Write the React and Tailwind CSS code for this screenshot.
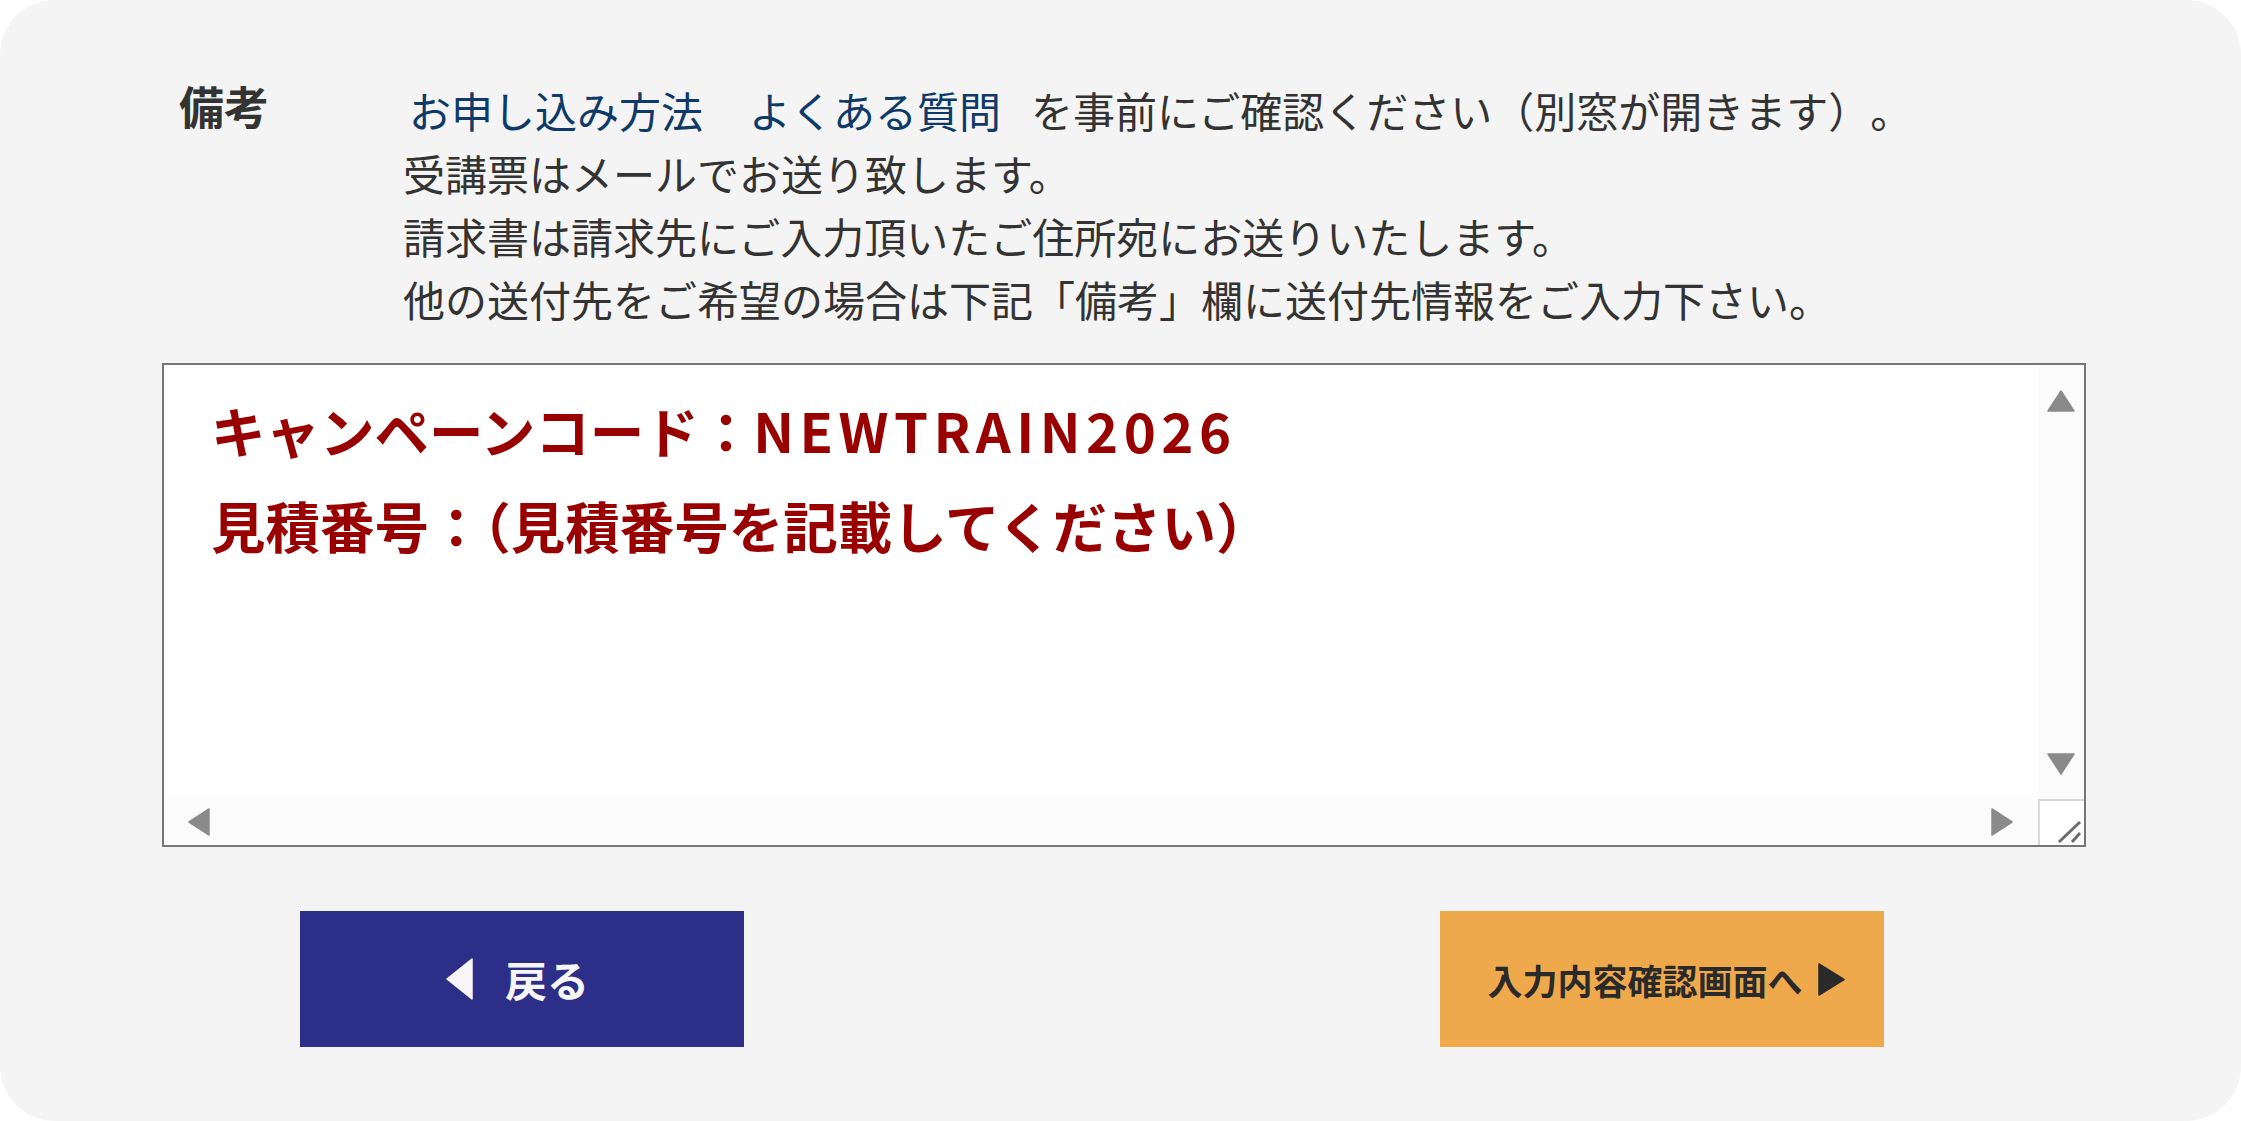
import React from "react";

function Tri({ dir, w, h, color, className = "" }) {
  let pts;
  if (dir === "up") pts = `${w / 2},1 ${w - 1},${h - 1} 1,${h - 1}`;
  else if (dir === "down") pts = `1,1 ${w - 1},1 ${w / 2},${h - 1}`;
  else if (dir === "left") pts = `${w - 1},1 ${w - 1},${h - 1} 1,${h / 2}`;
  else pts = `1,1 ${w - 1},${h / 2} 1,${h - 1}`;
  return (
    <svg width={w} height={h} viewBox={`0 0 ${w} ${h}`} className={className}>
      <polygon points={pts} fill={color} stroke={color} strokeWidth="1.5" strokeLinejoin="round" />
    </svg>
  );
}

export default function App() {
  return (
    <div className="w-[2241px] h-[1121px] bg-white font-['Noto_Sans_CJK_JP','Noto_Sans',sans-serif]">
      <div className="w-full h-full rounded-[55px] bg-[#f4f4f4] pt-[78px] pl-[162px]">
        {/* notes row */}
        <div className="flex pl-[17px]">
          <div className="w-[224px] shrink-0 text-[45px] leading-[56px] font-bold text-[#333333]">備考</div>
          <div className="text-[42px] leading-[63px] text-[#333333] whitespace-nowrap [text-spacing-trim:space-all]">
            <div>
              <a className="ml-[6px] text-[#0d3a68]">お申し込み方法</a>
              <a className="ml-[46px] text-[#0d3a68]">よくある質問</a>
              <span className="ml-[30px]">を事前にご確認ください（別窓が開きます）。</span>
            </div>
            <div>受講票はメールでお送り致します。</div>
            <div>請求書は請求先にご入力頂いたご住所宛にお送りいたします。</div>
            <div>他の送付先をご希望の場合は下記「備考」欄に送付先情報をご入力下さい。</div>
          </div>
        </div>

        {/* textarea */}
        <div className="mt-[33px] w-[1924px] h-[484px] border-2 border-[#767676] bg-white flex flex-col">
          <div className="flex flex-1 min-h-0">
            <div className="flex-1 pl-[47px] pt-[17px] text-[54.5px] leading-[95px] font-bold text-[#990000] whitespace-nowrap overflow-hidden">
              <div>
                キャンペーンコード：<span className="tracking-[5.5px]">NEWTRAIN2026</span>
              </div>
              <div>見積番号：（見積番号を記載してください）</div>
            </div>
            <div className="w-[46px] bg-[#fbfbfb] flex flex-col items-center justify-between pt-[25px] pb-[24px]">
              <Tri dir="up" w={28} h={22} color="#8a8a8a" />
              <Tri dir="down" w={28} h={22} color="#8a8a8a" />
            </div>
          </div>
          <div className="flex h-[46px]">
            <div className="flex-1 bg-[#fbfbfb] flex items-center justify-between pl-[24px] pr-[25px]">
              <Tri dir="left" w={22} h={28} color="#8a8a8a" />
              <Tri dir="right" w={22} h={28} color="#8a8a8a" />
            </div>
            <div className="w-[46px] bg-white border-l-2 border-t-2 border-[#d8d8d8] relative">
              <svg width="44" height="44" viewBox="0 0 44 44" className="absolute left-0 top-0">
                <line x1="19" y1="41" x2="40" y2="21" stroke="#6b6b6b" strokeWidth="3" />
                <line x1="32" y1="41" x2="40" y2="32" stroke="#6b6b6b" strokeWidth="3" />
              </svg>
            </div>
          </div>
        </div>

        {/* buttons */}
        <div className="mt-[64px] flex">
          <button className="ml-[138px] w-[444px] h-[136px] bg-[#2c2e87] flex items-center justify-center gap-[32px] pr-[9px] text-[42px] font-bold text-[#f6f6f6]">
            <Tri dir="left" w={27} h={42} color="#f6f6f6" />
            <span className="leading-none">戻る</span>
          </button>
          <button className="ml-[696px] w-[444px] h-[136px] bg-[#eea94c] flex items-center justify-center gap-[15px] pl-[8px] text-[35px] font-bold text-[#2a2a2a]">
            <span className="leading-none">入力内容確認画面へ</span>
            <Tri dir="right" w={27} h={33} color="#2a2a2a" />
          </button>
        </div>
      </div>
    </div>
  );
}
